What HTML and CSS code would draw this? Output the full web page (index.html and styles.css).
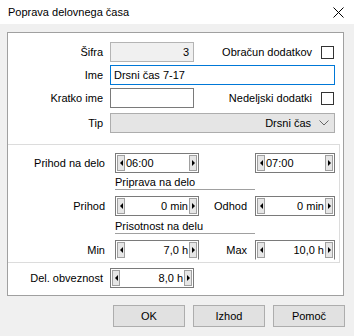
FILE: index.html
```html
<!DOCTYPE html>
<html lang="sl">
<head>
  <meta charset="UTF-8" />
  <title>Poprava delovnega časa</title>
  <link rel="stylesheet" href="styles.css">
</head>
<body>
  <div class="titlebar">
    <span class="title">Poprava delovnega časa</span>
    <svg class="close" width="11" height="11" viewBox="0 0 11 11"><path d="M0.5 0.5L10.5 10.5M10.5 0.5L0.5 10.5" stroke="#000" stroke-width="1" fill="none"/></svg>
  </div>

  <div class="panel">
    <div class="row">
      <label class="lbl">Šifra</label>
      <div class="field sifra">3</div>
      <span class="chk-label">Obračun dodatkov</span>
      <span class="chk"></span>
    </div>
    <div class="row gap3">
      <label class="lbl">Ime</label>
      <div class="field ime">Drsni čas 7-17</div>
    </div>
    <div class="row gap3">
      <label class="lbl">Kratko ime</label>
      <div class="field kratko"></div>
      <span class="chk-label">Nedeljski dodatki</span>
      <span class="chk"></span>
    </div>
    <div class="row gap5">
      <label class="lbl">Tip</label>
      <div class="field combo">
        <span>Drsni čas</span>
        <svg class="chev" width="10" height="6" viewBox="0 0 10 6"><path d="M0.5 0.5L5 5L9.5 0.5" stroke="#666" fill="none"/></svg>
      </div>
    </div>

    <div class="group">
      <div class="row">
        <label class="lbl wide">Prihod na delo</label>
        <div class="spin s1"><span class="arr l"></span><span class="val left">06:00</span><span class="arr r"></span></div>
        <label class="lbl2"></label>
        <div class="spin s2"><span class="arr l"></span><span class="val left">07:00</span><span class="arr r"></span></div>
      </div>
      <div class="caption">Priprava na delo</div>
      <div class="row gap6">
        <label class="lbl wide">Prihod</label>
        <div class="spin s1"><span class="arr l"></span><span class="val">0 min</span><span class="arr r"></span></div>
        <label class="lbl2">Odhod</label>
        <div class="spin s2"><span class="arr l"></span><span class="val">0 min</span><span class="arr r"></span></div>
      </div>
      <div class="caption c2">Prisotnost na delu</div>
      <div class="row gap6">
        <label class="lbl wide">Min</label>
        <div class="spin s1 open"><span class="arr l"></span><span class="val">7,0 h</span><span class="arr r"></span></div>
        <label class="lbl2">Max</label>
        <div class="spin s2 open"><span class="arr l"></span><span class="val">10,0 h</span><span class="arr r"></span></div>
      </div>
    </div>

    <div class="row gap5">
      <label class="lbl">Del. obveznost</label>
      <div class="spin s3"><span class="arr l"></span><span class="val">8,0 h</span><span class="arr r"></span></div>
    </div>
  </div>

  <div class="buttons">
    <button>OK</button>
    <button>Izhod</button>
    <button>Pomoč</button>
  </div>
</body>
</html>
```

FILE: styles.css
```css
body {
  margin: 0;
  width: 354px;
  height: 336px;
  background-color: #f0f0f0;
  font-family: 'Liberation Sans', Arial, sans-serif;
  font-size: 11px;
  color: #000;
  overflow: hidden;
}

.titlebar {
  height: 24px;
  background: #fff;
  display: flex;
  align-items: center;
  justify-content: space-between;
  padding: 0 10px 0 8px;
}

.title {
  font-size: 11px;
}

.panel {
  margin: 8px 0 0 7px;
  width: 335px;
  background: #fff;
  border: 1px solid #a0a0a0;
  padding: 9px 0 7px 0;
}

.row {
  display: flex;
  align-items: center;
  height: 20px;
}

.gap3 { margin-top: 3px; }
.gap5 { margin-top: 5px; }
.gap6 { margin-top: 6px; }

.lbl {
  width: 95px;
  margin-right: 7px;
  text-align: right;
}

.lbl.wide {
  width: 97px;
  margin-right: 10px;
}

.lbl2 {
  width: 48px;
  margin-right: 8px;
  text-align: right;
}

.field {
  box-sizing: border-box;
  height: 20px;
  border: 1px solid #7a7a7a;
  background: #fff;
  padding: 0 3px;
  line-height: 18px;
}

.sifra {
  width: 84px;
  background: #f0f0f0;
  border-color: #b4b4b4;
  text-align: right;
  padding-right: 4px;
}

.ime {
  width: 225px;
  border-color: #0078d7;
}

.kratko {
  width: 84px;
}

.combo {
  width: 225px;
  background: #e5e5e5;
  border-color: #adadad;
  display: flex;
  align-items: center;
  justify-content: flex-end;
  padding-right: 5px;
}

.chev {
  margin-left: 8px;
}

.chk-label {
  margin-left: auto;
  margin-right: 9px;
}

.chk {
  box-sizing: border-box;
  width: 13px;
  height: 13px;
  border: 1px solid #333;
  background: #fff;
  margin-right: 9px;
}

.group {
  margin-top: 11px;
  width: 331px;
  border: 1px solid #dcdcdc;
  border-left: none;
  padding: 8px 0 2px 0;
}

.caption {
  margin: 3px 0 0 107px;
  width: 140px;
  height: 13px;
  line-height: 13px;
  border-bottom: 1px solid #a0a0a0;
}

.caption.c2 {
  margin-top: 4px;
}

.spin {
  box-sizing: border-box;
  height: 20px;
  border: 1px solid #7a7a7a;
  background: #fff;
  display: flex;
  align-items: center;
  padding: 0 1px;
}

.spin.open {
  border-bottom-color: transparent;
}

.s1 { width: 84px; }
.s2 { width: 80px; }
.s3 { width: 84px; }

.val {
  flex: 1;
  text-align: right;
  padding: 0 1px;
}

.val.left {
  text-align: left;
}

.arr {
  box-sizing: border-box;
  width: 8px;
  height: 16px;
  background: #e6e6e6;
  border: 1px solid #a0a0a0;
  display: flex;
  align-items: center;
  justify-content: center;
}

.arr::before {
  content: '';
  width: 0;
  height: 0;
  border-top: 3px solid transparent;
  border-bottom: 3px solid transparent;
}

.arr.l::before {
  border-right: 3px solid #000;
}

.arr.r::before {
  border-left: 3px solid #000;
}

.buttons {
  display: flex;
  justify-content: flex-end;
  gap: 8px;
  margin-top: 9px;
  padding-right: 9px;
}

button {
  width: 72px;
  height: 22px;
  background: #e1e1e1;
  border: 1px solid #adadad;
  font-family: 'Liberation Sans', Arial, sans-serif;
  font-size: 11px;
  color: #000;
  padding: 0;
}
```
